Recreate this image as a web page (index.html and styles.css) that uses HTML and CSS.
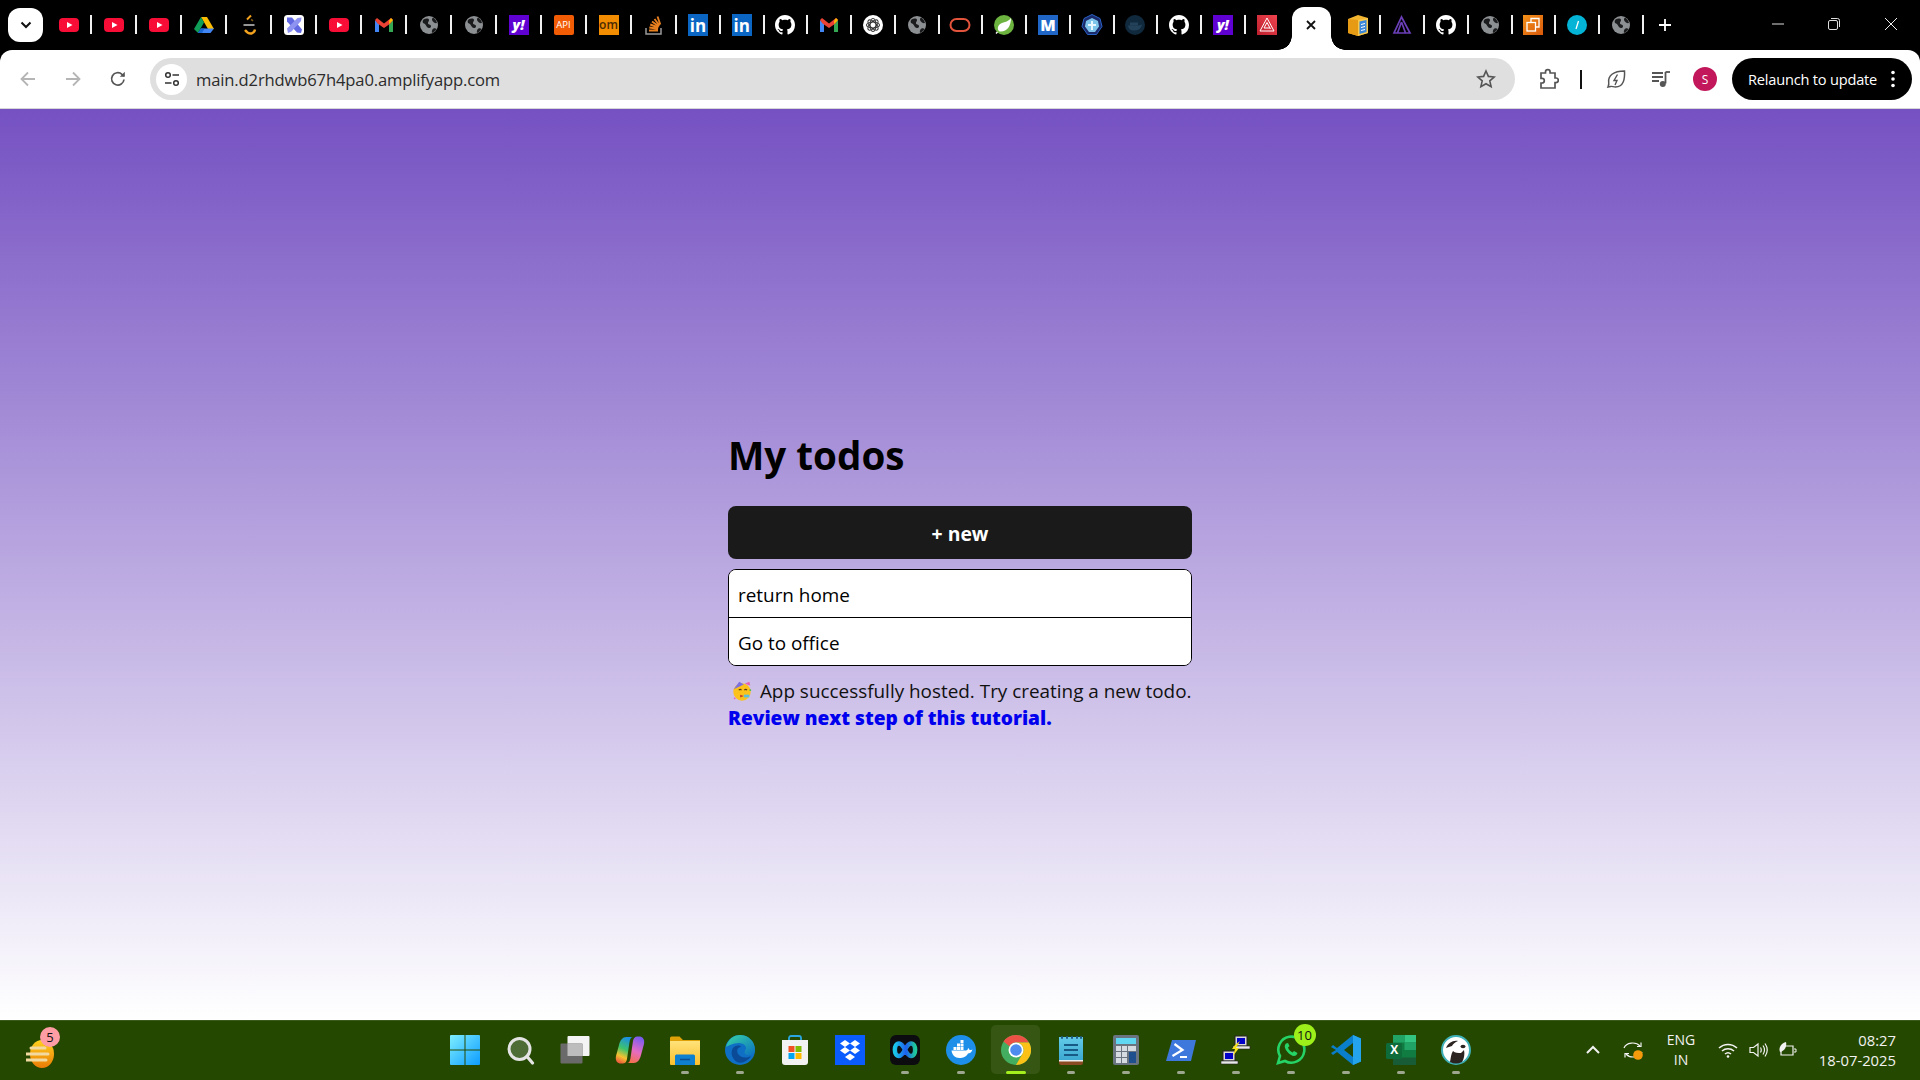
FILE: index.html
```html
<!DOCTYPE html>
<html lang="en">
<head>
<meta charset="utf-8">
<title>My todos</title>
<link rel="stylesheet" href="styles.css">
</head>
<body>
<svg class="sprite" aria-hidden="true">
  <defs>
    <linearGradient id="gWin" x1="0" y1="0" x2="1" y2="1"><stop offset="0" stop-color="#7eeeff"/><stop offset="1" stop-color="#0d9cff"/></linearGradient>
    <linearGradient id="gCop" x1=".6" y1="0" x2=".3" y2="1"><stop offset="0" stop-color="#1a8fe3"/><stop offset=".45" stop-color="#3fc46a"/><stop offset=".75" stop-color="#f5c330"/><stop offset="1" stop-color="#ee5a3c"/></linearGradient>
    <linearGradient id="gCop2" x1=".6" y1="0" x2=".3" y2="1"><stop offset="0" stop-color="#7a5cf0"/><stop offset=".55" stop-color="#e76cc0"/><stop offset="1" stop-color="#f4704c"/></linearGradient>
    <linearGradient id="gFold" x1="0" y1="0" x2="0" y2="1"><stop offset="0" stop-color="#ffe27a"/><stop offset="1" stop-color="#fbc02d"/></linearGradient>
    <linearGradient id="gEdge" x1="0" y1="0" x2="1" y2="1"><stop offset="0" stop-color="#38d6a5"/><stop offset="1" stop-color="#0b6fc2"/></linearGradient>
    <linearGradient id="gAmp" x1="0" y1="1" x2="1" y2="0"><stop offset="0" stop-color="#bd1f2d"/><stop offset="1" stop-color="#f0444f"/></linearGradient>
    <linearGradient id="gNote" x1="0" y1="0" x2="0" y2="1"><stop offset="0" stop-color="#63cbe8"/><stop offset="1" stop-color="#3aa6cf"/></linearGradient>
    <linearGradient id="gCopy" x1="0" y1="0" x2="1" y2="1"><stop offset="0" stop-color="#f39019"/><stop offset="1" stop-color="#d9590b"/></linearGradient>
    <linearGradient id="gMeet" x1="0" y1="0" x2="1" y2="0"><stop offset="0" stop-color="#19c6ea"/><stop offset=".55" stop-color="#1d5ff0"/><stop offset="1" stop-color="#1fc79a"/></linearGradient>
    <linearGradient id="gWeather" x1="0" y1="0" x2="0" y2="1"><stop offset="0" stop-color="#ffd21f"/><stop offset="1" stop-color="#ea7b06"/></linearGradient>
  </defs>

  <symbol id="i-yt" viewBox="0 0 24 24"><rect x="2" y="5" width="20" height="14" rx="4" fill="#f70d36"/><path d="M10 9l5.500 3-5.500 3z" fill="#fff"/></symbol>
  <symbol id="i-drive" viewBox="0 0 24 24"><path d="M9 4h6l7 12h-6z" fill="#fbbc04"/><path d="M9 4l3 5.600L6 20l-4-4z" fill="#0f9d58"/><path d="M6 20l3-4.400h13L18.500 20z" fill="#4285f4"/><path d="M9 15.600h3.500L10 20H6z" fill="#1967d2"/></symbol>
  <symbol id="i-amber" viewBox="0 0 24 24"><path d="M10 6.500Q12.500 4 14 2.500" fill="none" stroke="#f2a21e" stroke-width="2"/><path d="M14 6.500a6 6 0 0 1 2 1.500" fill="none" stroke="#7d5a16" stroke-width="1.500"/><path d="M6.500 12h11" stroke="#a8a8a8" stroke-width="1.800"/><path d="M8 17q3 4 6.500 3.500 3-.8 3.500-4" fill="none" stroke="#f2a21e" stroke-width="2.400"/></symbol>
  <symbol id="i-xtool" viewBox="0 0 24 24"><rect x="2" y="2" width="20" height="20" rx="3.500" fill="#fff"/><path d="M5 4.500h5L20 16.500l-1 3.500-4-.5L5 8.500z" fill="#6268e2"/><path d="M19.500 4.500L19 8l-9.500 10.500-3.500 1.500L5 15.500 15.500 5z" fill="#8e92f0"/></symbol>
  <symbol id="i-gmail" viewBox="0 0 24 24"><path d="M3 7v12h4V11z" fill="#4285f4"/><path d="M21 7v12h-4V11z" fill="#34a853"/><path d="M3 7l2-2 7 5.500L19 5l2 2-2.500 3.500L12 15l-6.500-4.500z" fill="#ea4335"/><path d="M19 5l2 2-3.800 4-.2-3z" fill="#fbbc04"/></symbol>
  <symbol id="i-globe" viewBox="0 0 24 24"><circle cx="12" cy="12" r="9" fill="#8d9093"/><path d="M6.500 6.500c2-1.500 5-1.500 5.500 0s-1.500 2.500-1 4 3.500 1 3 3-3 2-4 .500-1.500-3-3-3.500S5 8 6.500 6.500zM16 4.500c2 1 3.500 3 4 5.500-2 .5-3.500-.5-4.500-2s-.5-2.500.5-3.500zM16.500 15.500c1.500-.5 2.500 0 3 .5-1 2-2.500 3.300-4.500 4-.5-2 0-3.500 1.500-4.500z" fill="#1b1c1d"/></symbol>
  <symbol id="i-so" viewBox="0 0 24 24"><path d="M4 15v6h15v-6" fill="none" stroke="#9a9a9a" stroke-width="1.500"/><path d="M7 17.500h9M7.300 14.500l8.800 1.300M8.200 11.500l8.200 3M10 8.500l7 5M12.500 6l5 6.500M15.500 3.500l2.800 8" stroke="#e8801f" stroke-width="1.900"/></symbol>
  <symbol id="i-gh" viewBox="0 0 16 16"><path fill="#fff" d="M8 0C3.580 0 0 3.580 0 8c0 3.540 2.290 6.530 5.470 7.590.4.070.55-.17.55-.38 0-.19-.01-.82-.01-1.490-2.010.37-2.530-.49-2.690-.94-.09-.23-.48-.94-.82-1.130-.28-.15-.68-.52-.01-.53.63-.01 1.080.58 1.230.82.72 1.210 1.870.87 2.330.66.070-.52.28-.87.51-1.070-1.780-.2-3.640-.89-3.640-3.950 0-.87.31-1.590.82-2.150-.08-.2-.36-1.020.08-2.120 0 0 .67-.21 2.200.82.64-.18 1.320-.27 2-.27s1.360.09 2 .27c1.530-1.040 2.200-.82 2.200-.82.44 1.100.16 1.920.08 2.120.51.56.82 1.270.82 2.150 0 3.070-1.870 3.750-3.650 3.950.29.25.54.73.54 1.480 0 1.070-.01 1.930-.01 2.200 0 .21.15.46.55.38A8.013 8.013 0 0 0 16 8c0-4.420-3.580-8-8-8z"/></symbol>
  <symbol id="i-oai" viewBox="0 0 24 24"><circle cx="12" cy="12" r="10" fill="#fff"/><g fill="none" stroke="#333" stroke-width="1.100"><ellipse cx="12" cy="12" rx="6.500" ry="3"/><ellipse cx="12" cy="12" rx="6.500" ry="3" transform="rotate(45 12 12)"/><ellipse cx="12" cy="12" rx="6.500" ry="3" transform="rotate(90 12 12)"/><ellipse cx="12" cy="12" rx="6.500" ry="3" transform="rotate(135 12 12)"/></g></symbol>
  <symbol id="i-oracle" viewBox="0 0 24 24"><rect x="2.500" y="6" width="19" height="12" rx="6" fill="none" stroke="#e2543c" stroke-width="2"/></symbol>
  <symbol id="i-spring" viewBox="0 0 24 24"><circle cx="12" cy="12" r="10" fill="#6db33f"/><path d="M19 5C19 13 15 19 8 18.500 5.500 18 5 14 7.500 11.500 10 9 16 9.500 19 5z" fill="#fff"/><path d="M4 20.500l1.500-1.500" stroke="#fff" stroke-width="1.500"/></symbol>
  <symbol id="i-shield" viewBox="0 0 24 24"><path d="M12 1.500l8 4 2 8-5.500 8h-9L2 13.500l2-8z" fill="#1b2a6b" stroke="#2a62c8"/><path d="M12 5l6 3 1 5.500-4 5.500H9l-4-5.500L6 8z" fill="#7ec3ea"/><path d="M12 8v9M8 12h8" stroke="#e8f6ff" stroke-width="2"/></symbol>
  <symbol id="i-dockerdark" viewBox="0 0 24 24"><circle cx="12" cy="12" r="10" fill="#10293d"/><path d="M5 12.500h11c1 0 1.500-1 3-1-.5 3-3 6-7.500 6S5.500 15.500 5 12.500z" fill="#23425a"/><path d="M7 9.500h8v3H7z" fill="#23425a"/></symbol>
  <symbol id="i-amp" viewBox="0 0 24 24"><rect x="2" y="2" width="20" height="20" fill="url(#gAmp)"/><path d="M12 5L19 18H5zM12 9.500L15.500 16M12 9.500L9 15h6" fill="none" stroke="#fff" stroke-width="1"/></symbol>
  <symbol id="i-box" viewBox="0 0 24 24"><path d="M2 6l10-4 10 3v15l-10 3-10-3z" fill="#f3b52f"/><path d="M12 7l10-2v15l-10 3z" fill="#f9c94d"/><path d="M2 6l10 1v16l-10-3z" fill="#e79a14"/><path d="M13.500 8.500l7-1.500v12l-7 2z" fill="#3a86d8"/><path d="M15 11.500l4-1M15 14.500l4-1M15 17.500l4-1" stroke="#fff"/></symbol>
  <symbol id="i-amp2" viewBox="0 0 24 24"><path d="M11.500 4L20 20H4zM11.500 9L15.500 20M11.500 9L7.500 20" fill="none" stroke="#6a3fb8" stroke-width="1.700"/></symbol>
  <symbol id="i-copy" viewBox="0 0 24 24"><rect x="2" y="2" width="20" height="20" fill="url(#gCopy)"/><path d="M10 9V5.500h8V14h-3.500" fill="none" stroke="#fff" stroke-width="1.300"/><rect x="6" y="9.500" width="8.500" height="8.500" fill="none" stroke="#fff" stroke-width="1.300"/></symbol>
  <symbol id="i-cyan" viewBox="0 0 24 24"><circle cx="12" cy="12" r="10" fill="#04b4d6"/><path d="M13.500 8l-2.500 8" stroke="#fff" stroke-width="1.300"/></symbol>

  <symbol id="t-win" viewBox="0 0 30 30"><path d="M0 1a1 1 0 0 1 1-1h13.500v14.500H0zM15.500 0H29a1 1 0 0 1 1 1v13.500H15.500zM0 15.500h14.500V30H1a1 1 0 0 1-1-1zM15.500 15.500H30V29a1 1 0 0 1-1 1H15.500z" fill="url(#gWin)"/></symbol>
  <symbol id="t-search" viewBox="0 0 30 30"><circle cx="14.500" cy="14" r="10.500" fill="#4e6c36" stroke="#e4e4e4" stroke-width="3"/><path d="M22 21.500l5.500 6.500" stroke="#e4e4e4" stroke-width="3.200" stroke-linecap="round"/></symbol>
  <symbol id="t-view" viewBox="0 0 30 30"><rect x="7.500" y="1" width="22" height="20" rx="1" fill="#f4f4f4"/><rect x="0.500" y="8.500" width="22" height="20" rx="1" fill="#6a6a6a"/><rect x="7.500" y="8.500" width="15" height="12.500" fill="#bdbdbd"/></symbol>
  <symbol id="t-copilot" viewBox="0 0 30 30"><path d="M11 2h7c-2 0-3 2-3.500 5L12 24c-.5 3-2 4.500-4.500 4.500H6C2.500 28.500 0 26 1 21L4 10C5 5 8 2 11 2z" fill="url(#gCop)"/><path d="M19 28h-7c2 0 3-2 3.500-5L18 6c.5-3 2-4.500 4.500-4.500H24c3.500 0 6 2.500 5 7.500L26 20c-1 5-4 8-7 8z" fill="url(#gCop2)"/></symbol>
  <symbol id="t-folder" viewBox="0 0 30 30"><path d="M0 3a1.500 1.500 0 0 1 1.500-1.500h8L13 5h17v3H0z" fill="#dfa108"/><path d="M0 6h30v23a1 1 0 0 1-1 1H1a1 1 0 0 1-1-1z" fill="url(#gFold)"/><path d="M5 21a1.500 1.500 0 0 1 1.500-1.500h17A1.500 1.500 0 0 1 25 21v9H5z" fill="#0f7fd0"/><path d="M10 24.500h10" stroke="#0a4f91" stroke-width="1.500"/></symbol>
  <symbol id="t-edge" viewBox="0 0 30 30"><circle cx="15" cy="15" r="15" fill="#0f6fc4"/><path d="M1 12C3 4 9 0 15 0c8 0 15 6 15 15 0 4-4 6-8 5-3-1-3-3-1-6 1-2-2-6-7-6-6 0-11 3-13 4z" fill="url(#gEdge)"/><path d="M12 27c-5-3-7-10-4-14 3-3 7-3 8-1-3 0-5 3-3 7 2 3 7 5 13 2-3 5-9 8-14 6z" fill="#0a4a97"/></symbol>
  <symbol id="t-store" viewBox="0 0 30 30"><path d="M9 6V3a2 2 0 0 1 2-2h8a2 2 0 0 1 2 2v3" fill="none" stroke="#2aa7e0" stroke-width="1.800"/><path d="M2 5h26v22a3 3 0 0 1-3 3H5a3 3 0 0 1-3-3z" fill="#f2f2f2"/><rect x="8.500" y="11" width="6" height="6" fill="#f25022"/><rect x="15.500" y="11" width="6" height="6" fill="#7fba00"/><rect x="8.500" y="18" width="6" height="6" fill="#00a4ef"/><rect x="15.500" y="18" width="6" height="6" fill="#ffb900"/></symbol>
  <symbol id="t-dropbox" viewBox="0 0 30 30"><rect width="30" height="30" fill="#0a5cff"/><path d="M10 5l5 3.500-5 3.500-5-3.500zM20 5l5 3.500-5 3.500-5-3.500zM10 12l5 3.500-5 3.500-5-3.500zM20 12l5 3.500-5 3.500-5-3.500zM15 18.500l5 3.500-5 3.500-5-3.500z" fill="#fff"/></symbol>
  <symbol id="t-meet" viewBox="0 0 30 30"><rect width="30" height="30" rx="6" fill="#0c0c10"/><path d="M9 8.500c-5.500 0-5.500 12.500 0 12.500s6.500-12.500 12-12.500 5.500 12.500 0 12.500S14.500 8.500 9 8.500z" fill="none" stroke="url(#gMeet)" stroke-width="4.500"/></symbol>
  <symbol id="t-docker" viewBox="0 0 30 30"><circle cx="15" cy="15" r="15" fill="#1d8fe8"/><path d="M5 15.500h15c1.500 0 2-1.500 2-2.500 1 .5 1.500 1.500 1.500 2 1 0 2 0 3-.5-1 3-3 4-4.500 4-2 3.500-5 4.500-8.500 4.500-4.500 0-7.500-3-8-7.500z" fill="#fff"/><path d="M7.500 12h3v3h-3zM11 12h3v3h-3zM14.500 12h3v3h-3zM11 8.500h3v3h-3zM14.500 8.500h3v3h-3zM14.500 5h3v3h-3z" fill="#fff"/></symbol>
  <symbol id="t-chrome" viewBox="0 0 30 30"><circle cx="15" cy="15" r="15" fill="#34a853"/><path d="M15 0a15 15 0 0 1 13 7.500H15a7.500 7.500 0 0 0-6.500 3.750L2.500 6.500A15 15 0 0 1 15 0z" fill="#ea4335"/><path d="M28 7.500A15 15 0 0 1 15 30l6.500-11.250A7.500 7.500 0 0 0 15 7.500z" fill="#fbbc04"/><circle cx="15" cy="15" r="7.500" fill="#fff"/><circle cx="15" cy="15" r="5.800" fill="#3f82ee"/></symbol>
  <symbol id="t-notes" viewBox="0 0 30 30"><rect x="3" y="2" width="24" height="25" fill="url(#gNote)"/><path d="M3 26h24v2a2 2 0 0 1-2 2H5a2 2 0 0 1-2-2z" fill="#8a4a22"/><path d="M3 25h24v1.500H3z" fill="#eee"/><path d="M5 2.500h2M10 2.500h2M15 2.500h2M20 2.500h2M24 2.500h2" stroke="#1f5f8a" stroke-width="2.500"/><path d="M8 10h14M8 15h14M8 20h14" stroke="#175a86" stroke-width="2"/></symbol>
  <symbol id="t-calc" viewBox="0 0 30 30"><rect x="2" width="26" height="30" rx="2" fill="#6a7480"/><rect x="5" y="3" width="20" height="6" fill="#5fd6f2"/><path d="M5 11h5v5H5zM11 11h5v5h-5zM5 17h5v5H5zM11 17h5v5h-5zM5 23h5v5H5zM11 23h5v5h-5zM17 11h8v5h-8z" fill="#d5dbe0"/><rect x="18" y="17" width="7" height="11" fill="#1f4f8c"/></symbol>
  <symbol id="t-ps" viewBox="0 0 30 30"><path d="M6 5h24l-5 21H0z" fill="#3f78dc"/><path d="M8.500 9l8 6-10 6" fill="none" stroke="#fff" stroke-width="2.200"/><path d="M14 22h7" stroke="#fff" stroke-width="2"/></symbol>
  <symbol id="t-putty" viewBox="0 0 30 30"><rect x="14" y="1" width="12" height="10" fill="#d8d8d8" stroke="#222"/><rect x="16" y="3" width="8" height="6" fill="#0000c8"/><path d="M12 11h17v3H12z" fill="#e8e8e8" stroke="#222" stroke-width=".6"/><rect x="2" y="16" width="12" height="10" fill="#d8d8d8" stroke="#222"/><rect x="4" y="18" width="8" height="6" fill="#0000c8"/><path d="M0 26h17v3H0z" fill="#e8e8e8" stroke="#222" stroke-width=".6"/><path d="M19 6l-4 7 3 0-6 8 2-7-3 0 3-4z" fill="#f4e21a"/></symbol>
  <symbol id="t-wa" viewBox="0 0 30 30"><path d="M2 28l2-7A13 13 0 1 1 9 26z" fill="none" stroke="#25d366" stroke-width="2.600"/><path d="M10 8.500c-2 2-1.500 5 1.500 8.500s6.500 5 9 3l1-2-3.500-2-1.500 1.500c-2-1-4-3-4.500-5l1.500-1.500-1.500-3z" fill="#25d366"/></symbol>
  <symbol id="t-vs" viewBox="0 0 30 30"><path d="M22 0l8 3.500v23L22 30 6 17 2 20l-2-2 5-3-5-3 2-2 4 3z" fill="#0a7fcc"/><path d="M22 0l8 3.500v23L22 30z" fill="#25a4ee"/><path d="M22 8l-9 7 9 7z" fill="#254800"/></symbol>
  <symbol id="t-excel" viewBox="0 0 30 30"><rect x="7" width="23" height="30" rx="2" fill="#107c41"/><rect x="18.500" width="11.500" height="7.500" fill="#33c481"/><rect x="7" width="11.500" height="7.500" fill="#21a366"/><rect x="18.500" y="7.500" width="11.500" height="7.500" fill="#21a366"/><rect x="18.500" y="15" width="11.500" height="7.500" fill="#107c41"/><rect x="7" y="22.500" width="23" height="7.500" fill="#185c37"/><rect y="8" width="16" height="16" rx="1.500" fill="#0e6b3a"/></symbol>
  <symbol id="t-avatar" viewBox="0 0 30 30"><circle cx="15" cy="15" r="14" fill="#fff" stroke="#3fb0b8" stroke-width="2"/><path d="M5 13C7 8 12 5 17 6c-3 1-5 3-6 5-1 0-3 1-6 2z" fill="#2a2320"/><path d="M9 27c1-5 1-8 3-11 2 2 5 2 8 2l3-3c1 4 0 9-2 12-4 2-8 2-12 0z" fill="#2a2320"/><ellipse cx="22" cy="11.500" rx="2.500" ry="1.800" fill="#2a2320"/></symbol>

  <symbol id="e-party" viewBox="0 0 24 24"><circle cx="12" cy="13" r="9.500" fill="#fcc21b"/><path d="M3 10L9 2l5 3z" fill="#7b6fe0"/><path d="M15 4l5-2 1 4z" fill="#e85fb0"/><path d="M8.500 11q1.500-1.500 3 0M14.500 11q1.500-1.500 3 0" fill="none" stroke="#5a3a10" stroke-width="1.200"/><path d="M14 16h6v3h-6z" fill="#5bc0de"/><path d="M10 16l4 1.500-4 1.500z" fill="#c0392b"/><circle cx="4" cy="20" r="1" fill="#e85fb0"/><circle cx="21" cy="11" r="1" fill="#3fb950"/></symbol>
</svg>

<div class="window">
  <header class="tabstrip">
    <button class="tab-search" type="button">
      <svg class="chev" viewBox="0 0 12 8"><path d="M1.500 1.500L6 6l4.500-4.500" fill="none" stroke="#111" stroke-width="2"/></svg>
    </button>
    <div class="tabs">
      <span class="tab"><svg class="fav"><use href="#i-yt"/></svg></span>
      <span class="tab"><svg class="fav"><use href="#i-yt"/></svg></span>
      <span class="tab"><svg class="fav"><use href="#i-yt"/></svg></span>
      <span class="tab"><svg class="fav"><use href="#i-drive"/></svg></span>
      <span class="tab"><svg class="fav"><use href="#i-amber"/></svg></span>
      <span class="tab"><svg class="fav"><use href="#i-xtool"/></svg></span>
      <span class="tab"><svg class="fav"><use href="#i-yt"/></svg></span>
      <span class="tab"><svg class="fav"><use href="#i-gmail"/></svg></span>
      <span class="tab"><svg class="fav"><use href="#i-globe"/></svg></span>
      <span class="tab"><svg class="fav"><use href="#i-globe"/></svg></span>
      <span class="tab"><span class="fav-box yahoo">y!</span></span>
      <span class="tab"><span class="fav-box api">API</span></span>
      <span class="tab"><span class="fav-box om">om</span></span>
      <span class="tab"><svg class="fav"><use href="#i-so"/></svg></span>
      <span class="tab narrow"><span class="fav-box li">in</span></span>
      <span class="tab narrow"><span class="fav-box li">in</span></span>
      <span class="tab narrow"><svg class="fav-gh"><use href="#i-gh"/></svg></span>
      <span class="tab narrow"><svg class="fav"><use href="#i-gmail"/></svg></span>
      <span class="tab narrow"><svg class="fav"><use href="#i-oai"/></svg></span>
      <span class="tab narrow"><svg class="fav"><use href="#i-globe"/></svg></span>
      <span class="tab narrow"><svg class="fav"><use href="#i-oracle"/></svg></span>
      <span class="tab narrow"><svg class="fav"><use href="#i-spring"/></svg></span>
      <span class="tab narrow"><span class="fav-box emm">M</span></span>
      <span class="tab narrow"><svg class="fav"><use href="#i-shield"/></svg></span>
      <span class="tab narrow"><svg class="fav"><use href="#i-dockerdark"/></svg></span>
      <span class="tab narrow"><svg class="fav-gh"><use href="#i-gh"/></svg></span>
      <span class="tab narrow"><span class="fav-box yahoo">y!</span></span>
      <span class="tab narrow nosep"><svg class="fav"><use href="#i-amp"/></svg></span>
      <span class="tab-active"><svg class="tab-x" viewBox="0 0 12 12"><path d="M2 2l8 8M10 2l-8 8" stroke="#111" stroke-width="1.800"/></svg></span>
      <span class="tab narrow"><svg class="fav"><use href="#i-box"/></svg></span>
      <span class="tab narrow"><svg class="fav"><use href="#i-amp2"/></svg></span>
      <span class="tab narrow"><svg class="fav-gh"><use href="#i-gh"/></svg></span>
      <span class="tab narrow"><svg class="fav"><use href="#i-globe"/></svg></span>
      <span class="tab narrow"><svg class="fav"><use href="#i-copy"/></svg></span>
      <span class="tab narrow"><svg class="fav"><use href="#i-cyan"/></svg></span>
      <span class="tab narrow"><svg class="fav"><use href="#i-globe"/></svg></span>
      <span class="tab-new"><svg class="plus" viewBox="0 0 14 14"><path d="M7 1v12M1 7h12" stroke="#fff" stroke-width="1.800"/></svg></span>
    </div>
    <div class="win-controls">
      <span class="win-btn"><svg class="win-ic" viewBox="0 0 14 14"><path d="M1 7h12" stroke="#ddd" stroke-width="1"/></svg></span>
      <span class="win-btn"><svg class="win-ic" viewBox="0 0 14 14"><rect x="1.500" y="3.500" width="9" height="9" rx="1.500" fill="none" stroke="#ddd"/><path d="M4 1.500h6.500a2 2 0 0 1 2 2V10" fill="none" stroke="#ddd"/></svg></span>
      <span class="win-btn wide"><svg class="win-ic" viewBox="0 0 14 14"><path d="M1 1l12 12M13 1L1 13" stroke="#eee" stroke-width="1"/></svg></span>
    </div>
  </header>

  <nav class="toolbar">
    <span class="nav-btn"><svg class="nav-ic" viewBox="0 0 20 20"><path d="M17 10H4M10 3.500L3.500 10l6.500 6.500" fill="none" stroke="#b5b5b5" stroke-width="1.800"/></svg></span>
    <span class="nav-btn"><svg class="nav-ic" viewBox="0 0 20 20"><path d="M3 10h13M10 3.500l6.500 6.500-6.500 6.500" fill="none" stroke="#b5b5b5" stroke-width="1.800"/></svg></span>
    <span class="nav-btn"><svg class="nav-ic" viewBox="0 0 20 20"><path d="M16 10.500a6.200 6.200 0 1 1-2-5.200L16 7" fill="none" stroke="#555" stroke-width="1.700"/><path d="M16.800 2.800v5h-5z" fill="#555"/></svg></span>
    <div class="omnibox">
      <span class="site-info"><svg class="site-ic" viewBox="0 0 18 18"><circle cx="5" cy="5" r="2.300" fill="none" stroke="#333" stroke-width="1.500"/><path d="M9.500 5H16M2 13h6.500" stroke="#333" stroke-width="1.500"/><circle cx="13" cy="13" r="2.300" fill="none" stroke="#333" stroke-width="1.500"/></svg></span>
      <span class="url">main.d2rhdwb67h4pa0.amplifyapp.com</span>
      <svg class="star" viewBox="0 0 20 20"><path d="M10 2l2.400 5.400 5.800.6-4.400 3.900 1.300 5.800L10 14.700l-5.100 3 1.300-5.800L1.800 8l5.800-.6z" fill="none" stroke="#555" stroke-width="1.600"/></svg>
    </div>
    <span class="tool ext"><svg class="tool-ic" viewBox="0 0 22 22"><path d="M4 5h4.500V4a2.300 2.300 0 0 1 4.600 0v1H18v5h1a2.300 2.300 0 0 1 0 4.600h-1V20H4v-5h1a2.300 2.300 0 0 0 0-4.600H4z" fill="none" stroke="#555" stroke-width="1.700"/></svg></span>
    <span class="tool-sep"></span>
    <span class="tool leaf"><svg class="tool-ic" viewBox="0 0 22 22"><path d="M3 19c1-2 1-3 .7-5C3 8 8 3 19.500 3c.5 8-1 16-9 16-2 0-4-1-5-.5z" fill="none" stroke="#555" stroke-width="1.500"/><path d="M12.500 6.500l-3.500 6h3l-2 4.500" fill="none" stroke="#555" stroke-width="1.400"/></svg></span>
    <span class="tool media"><svg class="tool-ic" viewBox="0 0 22 22"><path d="M2 5h11M2 9h11M2 13h7" stroke="#555" stroke-width="1.800"/><path d="M15.500 4v11.500" stroke="#555" stroke-width="1.800"/><path d="M15.500 4H20" stroke="#555" stroke-width="1.800"/><circle cx="12.800" cy="16" r="3" fill="#555"/></svg></span>
    <span class="avatar">S</span>
    <span class="relaunch">
      <span class="relaunch-text">Relaunch to update</span>
      <svg class="kebab" viewBox="0 0 4 18"><circle cx="2" cy="2.500" r="1.800" fill="#fff"/><circle cx="2" cy="9" r="1.800" fill="#fff"/><circle cx="2" cy="15.500" r="1.800" fill="#fff"/></svg>
    </span>
  </nav>

  <section class="page">
    <main class="app">
      <h1 class="title">My todos</h1>
      <button class="new-btn" type="button">+ new</button>
      <ul class="todo-list">
        <li class="todo">return home</li>
        <li class="todo">Go to office</li>
      </ul>
      <div class="notice">
        <svg class="emoji"><use href="#e-party"/></svg> App successfully hosted. Try creating a new todo.<br>
        <a class="notice-link" href="#">Review next step of this tutorial.</a>
      </div>
    </main>
  </section>

  <footer class="taskbar">
    <div class="tb-left">
      <span class="weather">
        <svg class="weather-ic" viewBox="0 0 30 30"><ellipse cx="16" cy="15" rx="12" ry="14" fill="url(#gWeather)"/><path d="M5 9h14M0 15h22M0 21h20" stroke="#f2d9a0" stroke-width="3" stroke-linecap="round"/></svg>
        <span class="badge-pink">5</span>
      </span>
    </div>
    <div class="tb-center">
      <span class="tb-item"><svg class="tb-ic"><use href="#t-win"/></svg></span>
      <span class="tb-item"><svg class="tb-ic"><use href="#t-search"/></svg></span>
      <span class="tb-item"><svg class="tb-ic"><use href="#t-view"/></svg></span>
      <span class="tb-item"><svg class="tb-ic"><use href="#t-copilot"/></svg></span>
      <span class="tb-item run"><svg class="tb-ic"><use href="#t-folder"/></svg></span>
      <span class="tb-item run"><svg class="tb-ic"><use href="#t-edge"/></svg></span>
      <span class="tb-item"><svg class="tb-ic"><use href="#t-store"/></svg></span>
      <span class="tb-item"><svg class="tb-ic"><use href="#t-dropbox"/></svg></span>
      <span class="tb-item run"><svg class="tb-ic"><use href="#t-meet"/></svg></span>
      <span class="tb-item run"><svg class="tb-ic"><use href="#t-docker"/></svg></span>
      <span class="tb-item active"><svg class="tb-ic"><use href="#t-chrome"/></svg></span>
      <span class="tb-item run"><svg class="tb-ic"><use href="#t-notes"/></svg></span>
      <span class="tb-item run"><svg class="tb-ic"><use href="#t-calc"/></svg></span>
      <span class="tb-item run"><svg class="tb-ic"><use href="#t-ps"/></svg></span>
      <span class="tb-item run"><svg class="tb-ic"><use href="#t-putty"/></svg></span>
      <span class="tb-item run"><svg class="tb-ic"><use href="#t-wa"/></svg><span class="badge-green">10</span></span>
      <span class="tb-item run"><svg class="tb-ic"><use href="#t-vs"/></svg></span>
      <span class="tb-item run"><svg class="tb-ic"><use href="#t-excel"/></svg><span class="excel-x">X</span></span>
      <span class="tb-item run"><svg class="tb-ic"><use href="#t-avatar"/></svg></span>
    </div>
    <div class="tb-right">
      <span class="tray chevup"><svg class="tray-ic" viewBox="0 0 20 20"><path d="M4 13l6-6 6 6" fill="none" stroke="#f2f2f2" stroke-width="2"/></svg></span>
      <span class="tray sync"><svg class="tray-ic" viewBox="0 0 20 20"><path d="M1 8a9 7 0 0 1 16-2M19 12a9 7 0 0 1-16 2" fill="none" stroke="#f2f2f2" stroke-width="1.200"/><path d="M14 6.500h4v-4M6 13.500H2v4" fill="none" stroke="#f2f2f2" stroke-width="1.200"/><circle cx="15" cy="15" r="4.800" fill="#f59a0b"/></svg></span>
      <span class="lang">ENG<br>IN</span>
      <span class="tray"><svg class="tray-ic" viewBox="0 0 20 20"><path d="M1 8a13 13 0 0 1 18 0M4 11a9 9 0 0 1 12 0M7 14a4.500 4.500 0 0 1 6 0" fill="none" stroke="#f2f2f2" stroke-width="1.500"/><circle cx="10" cy="16.500" r="1.300" fill="#f2f2f2"/></svg></span>
      <span class="tray"><svg class="tray-ic" viewBox="0 0 20 20"><path d="M2 7.500h3.500L10 4v12l-4.500-3.500H2z" fill="none" stroke="#f2f2f2" stroke-width="1.200"/><path d="M12.500 7.500q1.500 2.500 0 5M15 5.500q3 4.500 0 9M17 3.500q4.500 6.500 0 13" fill="none" stroke="#f2f2f2" stroke-width="1.200"/></svg></span>
      <span class="tray"><svg class="tray-ic" viewBox="0 0 20 20"><path d="M5 6h10v9H3V9" fill="none" stroke="#f2f2f2" stroke-width="1.200"/><path d="M16 9h2v3h-2" fill="none" stroke="#f2f2f2"/><path d="M2 12C0 7 4 3 8 2c1 4-1 9-6 10z" fill="#f2f2f2"/></svg></span>
      <span class="clock"><span>08:27</span><span>18-07-2025</span></span>
    </div>
  </footer>
</div>
</body>
</html>
```
FILE: styles.css
```css
* { box-sizing: border-box; }
html, body { height: 100%; }
body {
  margin: 0;
  background: #000;
  font-family: "Open Sans", "Noto Sans", "Liberation Sans", sans-serif;
  overflow: hidden;
}
.sprite { position: absolute; width: 0; height: 0; }

.window { display: flex; flex-direction: column; height: 1080px; }

/* tab strip */
.tabstrip { display: flex; height: 50px; flex: none; padding-left: 8px; background: #000; }
.tab-search {
  width: 35px; height: 34px; margin-top: 8px; padding: 0; border: 0;
  border-radius: 12px; background: #fff;
  display: flex; align-items: center; justify-content: center;
}
.chev { width: 12px; height: 8px; }
.tabs { display: flex; margin-left: 3px; }
.tab { position: relative; flex: none; width: 45px; height: 50px; display: flex; align-items: center; justify-content: center; }
.tab.narrow { width: 43.750px; }
.tab::after { content: ""; position: absolute; right: -1px; top: 15px; width: 2px; height: 19px; background: #f0f0f0; }
.tab.nosep::after { display: none; }
.fav { width: 24px; height: 24px; }
.fav-gh { width: 20px; height: 20px; }
.fav-box {
  width: 20px; height: 20px; display: flex; align-items: center; justify-content: center;
  color: #fff; white-space: nowrap; line-height: 1;
}
.yahoo { background: #5f01d1; font-size: 14px; font-weight: 800; font-style: italic; }
.api { background: #f25c05; font-size: 9.500px; border-radius: 2px; }
.om { background: #f28c00; color: #4a2a00; font-size: 12px; font-weight: 600; }
.li { background: #0a66c2; height: 22px; font-size: 17px; font-weight: 700; }
.emm { background: #1f66c7; font-size: 16px; font-weight: 800; }
.tab-active {
  position: relative; flex: none; width: 39px; height: 43px; margin: 7px 6px 0 3px;
  background: #fff; border-radius: 12px 12px 0 0;
  display: flex; align-items: center; justify-content: center; padding-bottom: 7px;
}
.tab-active::before, .tab-active::after {
  content: ""; position: absolute; bottom: 0; width: 14px; height: 14px;
}
.tab-active::before { left: -14px; background: radial-gradient(circle at 0 0, transparent 13.500px, #fff 14px); }
.tab-active::after { right: -14px; background: radial-gradient(circle at 100% 0, transparent 13.500px, #fff 14px); }
.tab-x { width: 12px; height: 12px; }
.tab-new { width: 44px; height: 50px; display: flex; align-items: center; justify-content: center; }
.plus { width: 14px; height: 14px; }
.win-controls { margin-left: auto; display: flex; }
.win-btn { width: 56px; height: 50px; display: flex; align-items: center; justify-content: center; padding-bottom: 2px; }
.win-btn.wide { width: 58px; }
.win-ic { width: 14px; height: 14px; }

/* toolbar */
.toolbar {
  display: flex; align-items: center; height: 59px; flex: none;
  padding: 0 8px 0 5px; background: #fff;
  border-radius: 12px 12px 0 0; border-bottom: 1px solid #d6d6d6;
}
.nav-btn { width: 45px; display: flex; justify-content: center; }
.nav-ic { width: 20px; height: 20px; }
.omnibox {
  flex: 1; height: 42px; margin-left: 10px; padding: 0 16px 0 6px;
  background: #dfdfdf; border-radius: 21px;
  display: flex; align-items: center;
}
.site-info { width: 31px; height: 31px; border-radius: 50%; background: #fff; display: flex; align-items: center; justify-content: center; }
.site-ic { width: 18px; height: 18px; }
.url { margin-left: 9px; font-size: 16.600px; color: #2c2c2c; letter-spacing: -.15px; }
.star { width: 20px; height: 20px; margin-left: auto; margin-right: 3px; }
.tool { width: 36px; display: flex; justify-content: center; }
.tool-ic { width: 22px; height: 22px; }
.ext { margin-left: 15px; }
.tool-sep { width: 2px; height: 19px; margin-left: 14px; background: #111; }
.leaf { margin-left: 16px; }
.media { margin-left: 9px; }
.avatar {
  width: 24px; height: 24px; margin-left: 14px; border-radius: 50%;
  background: #c2185b; color: #fff; font-size: 12px;
  display: flex; align-items: center; justify-content: center;
}
.relaunch {
  width: 180px; height: 42px; margin-left: 15px; padding: 0 17px 0 16px;
  border-radius: 21px; background: #000; color: #fff;
  display: flex; align-items: center; justify-content: space-between;
}
.relaunch-text { font-size: 14.600px; letter-spacing: -.2px; white-space: nowrap; }
.kebab { width: 4px; height: 18px; flex: none; }

/* page */
.page {
  flex: 1; display: flex; align-items: center; justify-content: center;
  background: linear-gradient(180deg, rgb(117, 81, 194), rgb(255, 255, 255));
  font-size: 18.900px; color: #111;
}
.app { width: 464px; display: flex; flex-direction: column; gap: 10px; }
.title { margin: 30px 0 14px; font-size: 38.600px; line-height: 54px; font-weight: 700; color: #000; }
.new-btn {
  height: 53px; padding: 2px 0 0; border: 0; border-radius: 8px;
  background: #1a1a1a; color: #fff;
  font: 700 19.400px "Open Sans", sans-serif;
}
.todo-list { margin: 0; padding: 0; list-style: none; background: #fff; border: 1px solid #000; border-radius: 8px; overflow: hidden; }
.todo { height: 47px; padding: 4px 9px 0; display: flex; align-items: center; background: #fff; color: #000; }
.todo + .todo { height: 48px; border-top: 1px solid #000; }
.notice { margin-top: 2px; line-height: 27px; white-space: nowrap; }
.emoji { width: 22px; height: 22px; margin: 0 2px 0 3px; vertical-align: -4px; }
.notice-link { color: #0000ee; font-weight: 800; text-decoration: none; font-size: 19.100px; }

/* taskbar */
.taskbar {
  flex: none; height: 60px; background: #254800; border-top: 1px solid #3a5a1c;
  display: grid; grid-template-columns: 1fr auto 1fr;
}
.tb-left { display: flex; align-items: center; padding-left: 26px; }
.weather { position: relative; width: 30px; height: 30px; margin-top: 6px; }
.weather-ic { width: 30px; height: 30px; }
.badge-pink {
  position: absolute; left: 14px; top: -12px; width: 20px; height: 20px; border-radius: 50%;
  background: #ff9da5; color: #111; font-size: 13px;
  display: flex; align-items: center; justify-content: center;
}
.tb-center { display: flex; padding-left: 1px; }
.tb-item { position: relative; width: 55.100px; height: 59px; padding-bottom: 2px; display: flex; align-items: center; justify-content: center; }
.tb-ic { width: 30px; height: 30px; }
.tb-item.run::after, .tb-item.active::after {
  content: ""; position: absolute; bottom: 6px; left: 50%; width: 8px; height: 3px;
  margin-left: -4px; border-radius: 2px; background: #9da78f;
}
.tb-item.active::before {
  content: ""; position: absolute; left: 3px; top: 4px; width: 49px; height: 49px;
  background: rgba(255,255,255,.08); border-radius: 5px;
}
.tb-item.active::after { width: 20px; margin-left: -10px; background: #a3f01e; }
.badge-green {
  position: absolute; left: 30px; top: 3px; width: 22px; height: 22px; border-radius: 50%;
  background: #9ef01a; color: #111; font-size: 13px;
  display: flex; align-items: center; justify-content: center;
}
.excel-x {
  position: absolute; left: 12.500px; top: 21px; width: 16px; text-align: center;
  color: #fff; font-size: 12px; font-weight: 700; line-height: 16px;
}
.tb-right { display: flex; align-items: center; justify-content: flex-end; padding: 0 24px 2px 0; color: #f2f2f2; }
.tray { width: 30px; display: flex; justify-content: center; }
.tray-ic { width: 20px; height: 20px; }
.chevup { margin-right: 10px; }
.sync { margin-right: 13px; }
.lang { width: 40px; margin-right: 12px; font-size: 14px; line-height: 20px; text-align: center; }
.clock { width: 78px; margin-left: 15px; font-size: 14.800px; line-height: 20px; display: flex; flex-direction: column; align-items: flex-end; white-space: nowrap; }
```
